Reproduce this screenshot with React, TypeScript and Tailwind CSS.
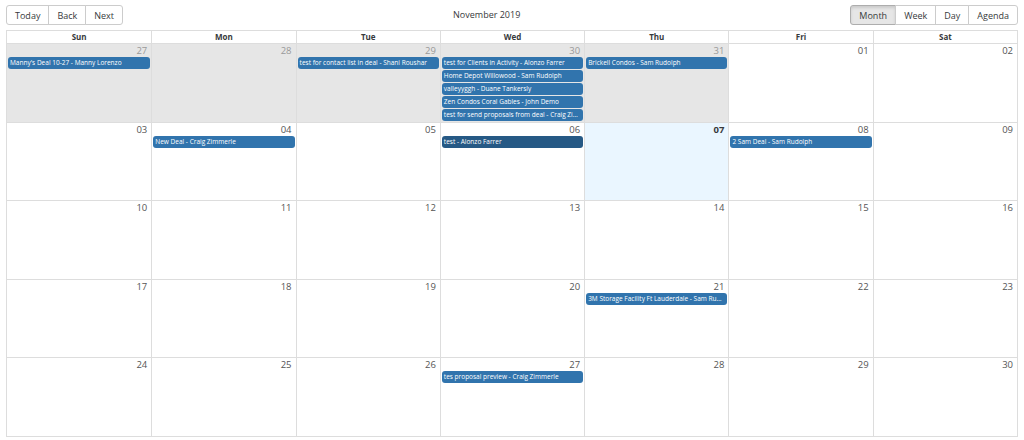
import React from 'react';

type Ev = { title: string; selected?: boolean };
type Day = { label: string; off?: boolean; today?: boolean; events?: Ev[] };

const weekdays = ['Sun', 'Mon', 'Tue', 'Wed', 'Thu', 'Fri', 'Sat'];

const weeks: Day[][] = [
    [
        { label: '27', off: true, events: [{ title: "Manny's Deal 10-27 - Manny Lorenzo" }] },
        { label: '28', off: true },
        { label: '29', off: true, events: [{ title: 'test for contact list in deal - Shani Roushar' }] },
        {
            label: '30',
            off: true,
            events: [
                { title: 'test for Clients in Activity - Alonzo Farrer' },
                { title: 'Home Depot Willowood - Sam Rudolph' },
                { title: 'valleyyggh - Duane Tankersly' },
                { title: 'Zen Condos Coral Gables - John Demo' },
                { title: 'test for send proposals from deal - Craig Zimmerle' },
            ],
        },
        { label: '31', off: true, events: [{ title: 'Brickell Condos - Sam Rudolph' }] },
        { label: '01' },
        { label: '02' },
    ],
    [
        { label: '03' },
        { label: '04', events: [{ title: 'New Deal - Craig Zimmerle' }] },
        { label: '05' },
        { label: '06', events: [{ title: 'test - Alonzo Farrer', selected: true }] },
        { label: '07', today: true },
        { label: '08', events: [{ title: '2 Sam Deal - Sam Rudolph' }] },
        { label: '09' },
    ],
    [
        { label: '10' },
        { label: '11' },
        { label: '12' },
        { label: '13' },
        { label: '14' },
        { label: '15' },
        { label: '16' },
    ],
    [
        { label: '17' },
        { label: '18' },
        { label: '19' },
        { label: '20' },
        { label: '21', events: [{ title: '3M Storage Facility Ft Lauderdale - Sam Rudolph' }] },
        { label: '22' },
        { label: '23' },
    ],
    [
        { label: '24' },
        { label: '25' },
        { label: '26' },
        { label: '27', events: [{ title: 'tes proposal preview - Craig Zimmerle' }] },
        { label: '28' },
        { label: '29' },
        { label: '30' },
    ],
];

const ToolButton = ({ label, active, first, last }: { label: string; active?: boolean; first?: boolean; last?: boolean }) => (
    <button
        className={`h-[20px] px-[8px] border text-[9px] text-[#373a3c] leading-none ${first ? 'rounded-l-[3px]' : '-ml-px'} ${last ? 'rounded-r-[3px]' : ''} ${active ? 'bg-[#e6e6e6] shadow-[inset_0_2px_3px_rgba(0,0,0,0.12)] border-[#adadad]' : 'bg-white border-[#ccc]'}`}
    >
        {label}
    </button>
);

export default function App() {
    return (
        <div className="w-[1024px] h-[440px] bg-white flex flex-col px-[6px] pt-[5px] font-['Open_Sans',sans-serif] text-[#373a3c]">
            <div className="flex items-center h-[20px]">
                <div className="flex">
                    <ToolButton label="Today" first />
                    <ToolButton label="Back" />
                    <ToolButton label="Next" last />
                </div>
                <div className="flex-1 text-center text-[9px]">November 2019</div>
                <div className="flex">
                    <ToolButton label="Month" first active />
                    <ToolButton label="Week" />
                    <ToolButton label="Day" />
                    <ToolButton label="Agenda" last />
                </div>
            </div>

            <div className="mt-[5px] h-[407px] border border-[#ddd] flex flex-col">
                <div className="grid grid-cols-7 h-[13px] border-b border-[#ddd] shrink-0">
                    {weekdays.map((d, i) => (
                        <div
                            key={d}
                            className={`flex items-center justify-center text-[8px] font-bold text-[#373a3c] ${i > 0 ? 'border-l border-[#ddd]' : ''}`}
                        >
                            {d}
                        </div>
                    ))}
                </div>
                {weeks.map((week, wi) => (
                    <div key={wi} className={`flex-1 grid grid-cols-7 min-h-0 ${wi > 0 ? 'border-t border-[#ddd]' : ''}`}>
                        {week.map((day, di) => (
                            <div
                                key={di}
                                className={`flex flex-col min-w-0 overflow-hidden ${di > 0 ? 'border-l border-[#ddd]' : ''} ${day.off ? 'bg-[#e6e6e6]' : day.today ? 'bg-[#eaf6ff]' : 'bg-white'}`}
                            >
                                <div
                                    className={`h-[13px] pr-[4px] text-right text-[9.5px] leading-[14px] ${day.off ? 'text-[#999]' : day.today ? 'font-bold text-[#373a3c]' : 'text-[#555]'}`}
                                >
                                    {day.label}
                                </div>
                                <div className="flex flex-col gap-px px-px">
                                    {(day.events || []).map((ev, ei) => (
                                        <div
                                            key={ei}
                                            className={`h-[12px] rounded-[3px] px-[2px] text-white text-[6.5px] leading-[12px] whitespace-nowrap overflow-hidden text-ellipsis ${ev.selected ? 'bg-[#265985]' : 'bg-[#3174ad]'}`}
                                        >
                                            {ev.title}
                                        </div>
                                    ))}
                                </div>
                            </div>
                        ))}
                    </div>
                ))}
            </div>
        </div>
    );
}
